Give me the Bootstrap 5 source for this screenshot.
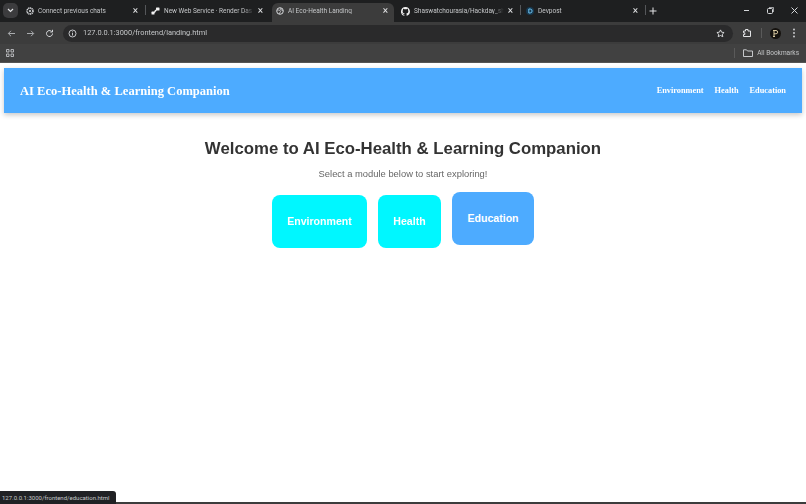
<!DOCTYPE html>
<html lang="en">
<head>
<meta charset="utf-8">
<title>AI Eco-Health Landing</title>
<link href="https://cdn.jsdelivr.net/npm/bootstrap@5.3.0/dist/css/bootstrap.min.css" rel="stylesheet">
<style>
html,body{height:100%;overflow:hidden;background:#fff}
.chrome-ui{font-family:Roboto,"Liberation Sans",sans-serif;color:#c4c6c8;font-size:6.5px;line-height:1;filter:blur(.35px)}
.tabstrip{height:22px;background:#1e1f20;padding:3px 0 0 3px}
.tab-search{width:15px;height:15px;border-radius:5px;background:#3c3c3e;margin-right:4px}
.tabitem{width:122px;height:19px;padding:0 6px 3px 4px;border-radius:6px 6px 0 0;flex:none}
.tabitem.on{background:#3c3c3c}
.tabtitle{flex:1;overflow:hidden;white-space:nowrap;margin:0 4px;-webkit-mask-image:linear-gradient(90deg,#000 88%,transparent);mask-image:linear-gradient(90deg,#000 88%,transparent)}
.tabx{font-size:10px;color:#e3e4e6;line-height:1}
.tabgap{width:3px;height:19px;flex:none;padding:2px 1px 7px}
.tabgap i{display:block;width:1px;height:10px;background:#55575a}
.tabsep{width:1px;height:10px;background:#5a5a5a;flex:none}
.toolbar{height:22px;background:#3c3c3c;padding:0 10px 0 7px}
.nav-glyph{margin-right:10px}
.omnibox{height:17px;border-radius:9px;background:#2a2a2b;flex:1;margin:0 9px 0 -1px;padding:0 8px 0 5px;font-size:7.4px}
.omni-info{margin-right:6px}
.bmbar{height:19px;background:#414141;padding:0 7px 0 6px;border-bottom:1px solid #555}
.wctl{width:24px}
.plus-ico{margin-left:2px;margin-bottom:3px}
.sep-r{margin-left:9px;margin-right:8px}
.dots-ico{margin-left:11px}
.site-bar{margin:5px 4px 0;height:45px;background:#4dabff;padding:1px 16px 0;box-shadow:0 2px 5px rgba(0,0,0,.22);font-family:"Liberation Serif",serif;font-weight:700;color:#fff;filter:blur(.25px)}
.site-title{font-size:12.55px}
.site-links{font-size:8.3px;gap:11px}
.site-links a{color:#fff;text-decoration:none}
.hero{padding-top:25px;font-family:"Liberation Sans",Arial,sans-serif;filter:blur(.25px)}
.hero-head{font-size:16.8px;font-weight:700;color:#333;margin:0;line-height:22px}
.hero-sub{font-size:9.4px;color:#666;margin:8px 0 0;line-height:12px}
.tilebox{gap:11px;margin-top:15px}
.tile{height:53px;border-radius:8px;color:#fff;font-size:10.6px;font-weight:700;text-decoration:none;background:#00f7ff}
.tile-env{width:95px}.tile-hea{width:63px}
.tile-edu{width:82px;background:#4dabff;transform:translateY(-3px)}
.statusline{position:absolute;left:0;bottom:0;height:13px;width:116px;background:#202124;color:#c4c6c8;font-family:Roboto,"Liberation Sans",sans-serif;font-size:6px;padding:0 2px;border-radius:0 3px 0 0;line-height:13px;white-space:nowrap}
.bottomline{position:absolute;left:0;right:0;bottom:0;height:2px;background:#3c3c3c}
</style>
</head>
<body class="position-relative">
<div class="chrome-ui">
  <div class="tabstrip d-flex align-items-start">
    <div class="tab-search d-flex align-items-center justify-content-center">
      <svg width="7" height="5" viewBox="0 0 7 5"><path d="M1 1l2.500 2.500L6 1" fill="none" stroke="#e3e4e6" stroke-width="1.200"/></svg>
    </div>
    <div class="tabitem d-flex align-items-center">
      <svg width="8" height="8" viewBox="0 0 8 8"><circle cx="4" cy="4" r="3" fill="none" stroke="#d5d7da" stroke-width="1.600" stroke-dasharray="1.200 .5"/><circle cx="4" cy="4" r="1.100" fill="#d5d7da"/></svg>
      <span class="tabtitle">Connect previous chats</span><span class="tabx">×</span>
    </div>
    <span class="tabgap"><i></i></span>
    <div class="tabitem d-flex align-items-center">
      <svg width="9" height="8" viewBox="0 0 9 8"><rect x=".5" y="4.600" width="3" height="3" rx=".6" fill="#f2f2f2"/><rect x="5" y=".5" width="3.500" height="3" rx=".6" fill="#f2f2f2"/><path d="M2.800 5.500C3.500 3.500 4 2.800 5.500 2.500v1.500C4.700 4.300 4.500 5 4 6z" fill="#f2f2f2"/></svg>
      <span class="tabtitle">New Web Service · Render Das</span><span class="tabx">×</span>
    </div>
    <span class="tabgap"></span>
    <div class="tabitem on d-flex align-items-center">
      <svg width="8" height="8" viewBox="0 0 8 8"><circle cx="4" cy="4" r="3.300" fill="none" stroke="#d5d7da"/><path d="M1 3h2.500l1 1.500L3 7M5 1l-.5 1.500L7 3.500" fill="none" stroke="#d5d7da" stroke-width=".8"/></svg>
      <span class="tabtitle">AI Eco-Health Landing</span><span class="tabx">×</span>
    </div>
    <span class="tabgap"></span>
    <div class="tabitem d-flex align-items-center">
      <svg width="9" height="9" viewBox="0 0 16 16"><path fill="#f0f0f0" d="M8 0a8 8 0 0 0-2.500 15.600c.4.100.5-.2.5-.4v-1.400c-2.200.5-2.700-1-2.700-1-.4-.9-.9-1.200-.9-1.200-.7-.5.100-.5.100-.5.800.1 1.200.8 1.200.8.700 1.200 1.900.9 2.300.7.100-.5.300-.9.500-1.100-1.800-.2-3.600-.9-3.600-4 0-.9.300-1.600.8-2.100-.1-.2-.4-1 .1-2.100 0 0 .7-.2 2.200.8a7.600 7.600 0 0 1 4 0c1.500-1 2.200-.8 2.200-.8.400 1.100.2 1.900.1 2.100.5.600.8 1.300.8 2.100 0 3.100-1.900 3.700-3.700 3.900.3.300.6.800.6 1.500v2.200c0 .2.100.5.600.4A8 8 0 0 0 8 0z"/></svg>
      <span class="tabtitle">Shaswatchourasia/Hackday_sha</span><span class="tabx">×</span>
    </div>
    <span class="tabgap"><i></i></span>
    <div class="tabitem d-flex align-items-center">
      <svg width="8" height="8" viewBox="0 0 8 8"><circle cx="4" cy="4" r="4" fill="#17384f"/><path d="M2.800 2h1.300a2 2 0 0 1 0 4H2.800z" fill="none" stroke="#6ec2ee" stroke-width="1"/></svg>
      <span class="tabtitle">Devpost</span><span class="tabx">×</span>
    </div>
    <span class="tabgap"><i></i></span>
    <svg class="align-self-center plus-ico" width="8" height="8" viewBox="0 0 8 8"><path d="M4 .5v7M.5 4h7" stroke="#e3e4e6" stroke-width="1"/></svg>
    <div class="ms-auto d-flex align-self-center mb-1">
      <span class="wctl text-center"><svg width="7" height="7" viewBox="0 0 7 7"><path d="M1 3.500h5" stroke="#d5d7da"/></svg></span>
      <span class="wctl text-center"><svg width="7" height="7" viewBox="0 0 7 7"><rect x=".5" y="1.500" width="5" height="5" rx="1" fill="none" stroke="#d5d7da"/><path d="M2 .5h4.500V5" fill="none" stroke="#d5d7da" stroke-width=".7"/></svg></span>
      <span class="wctl text-center"><svg width="7" height="7" viewBox="0 0 7 7"><path d="M.5.5l6 6M6.500.5l-6 6" stroke="#d5d7da"/></svg></span>
    </div>
  </div>
  <div class="toolbar d-flex align-items-center">
    <svg width="9" height="9" viewBox="0 0 9 9" class="nav-glyph"><path d="M8 4.500H1.500M4 1.800L1.300 4.500 4 7.200" fill="none" stroke="#a9abae"/></svg>
    <svg width="9" height="9" viewBox="0 0 9 9" class="nav-glyph"><path d="M1 4.500h6.500M5 1.800l2.700 2.700L5 7.200" fill="none" stroke="#a9abae"/></svg>
    <svg width="9" height="9" viewBox="0 0 9 9" class="nav-glyph"><path d="M7.500 4.500A3 3 0 1 1 6.600 2.400M7.500 .8v2.200H5.300" fill="none" stroke="#d5d7da"/></svg>
    <div class="omnibox d-flex align-items-center">
      <svg width="9" height="9" viewBox="0 0 9 9" class="omni-info"><circle cx="4.500" cy="4.500" r="3.500" fill="none" stroke="#d5d7da" stroke-width=".9"/><path d="M4.500 4v2.500M4.500 2.400v.9" stroke="#d5d7da" stroke-width=".9"/></svg>
      <span>127.0.0.1:3000/frontend/landing.html</span>
      <svg class="ms-auto" width="9" height="9" viewBox="0 0 9 9"><path d="M4.500 .9l1.100 2.300 2.500.3-1.800 1.700.5 2.500-2.300-1.200-2.300 1.200.5-2.500L.9 3.500l2.500-.3z" fill="none" stroke="#e3e4e6" stroke-width=".9"/></svg>
    </div>
    <svg width="10" height="10" viewBox="0 0 10 10"><path d="M1.500 3h2V1.500h2.500V3h2.500v5.500h-7V6.500h1.300V4.800H1.500z" fill="none" stroke="#e3e4e6"/></svg>
    <span class="tabsep sep-r"></span>
    <svg width="11" height="11" viewBox="0 0 11 11"><circle cx="5.500" cy="5.500" r="5.500" fill="#15120e"/><path d="M4 8.500V2.500h2a1.600 1.600 0 0 1 0 3.300H4M3 2.500h2M3 8.500h2" fill="none" stroke="#d8c8a0" stroke-width="1"/></svg>
    <svg class="dots-ico" width="4" height="10" viewBox="0 0 4 10"><circle cx="2" cy="1.500" r=".9" fill="#d5d7da"/><circle cx="2" cy="5" r=".9" fill="#d5d7da"/><circle cx="2" cy="8.500" r=".9" fill="#d5d7da"/></svg>
  </div>
  <div class="bmbar d-flex align-items-center">
    <svg width="8" height="8" viewBox="0 0 8 8"><path d="M.5.5h2.500V3H.5zM5 .5h2.500V3H5zM.5 5h2.500v2.500H.5zM5 5h2.500v2.500H5z" fill="none" stroke="#bfc1c4" stroke-width=".9"/></svg>
    <span class="tabsep ms-auto"></span>
    <svg class="ms-2" width="10" height="8" viewBox="0 0 10 8"><path d="M.5 7.500V.8h3l1 1.200h5v5.500z" fill="none" stroke="#d5d7da" stroke-width=".9"/></svg>
    <span class="ms-1">All Bookmarks</span>
  </div>
</div>

<header class="site-bar d-flex align-items-center justify-content-between">
  <span class="site-title">AI Eco-Health &amp; Learning Companion</span>
  <nav class="site-links d-flex">
    <a href="#">Environment</a><a href="#">Health</a><a href="#">Education</a>
  </nav>
</header>

<main class="hero text-center">
  <h1 class="hero-head">Welcome to AI Eco-Health &amp; Learning Companion</h1>
  <p class="hero-sub">Select a module below to start exploring!</p>
  <div class="tilebox d-flex justify-content-center">
    <a class="tile tile-env d-flex align-items-center justify-content-center" href="#">Environment</a>
    <a class="tile tile-hea d-flex align-items-center justify-content-center" href="#">Health</a>
    <a class="tile tile-edu d-flex align-items-center justify-content-center" href="#">Education</a>
  </div>
</main>

<div class="bottomline"></div>
<div class="statusline">127.0.0.1:3000/frontend/education.html</div>
</body>
</html>
